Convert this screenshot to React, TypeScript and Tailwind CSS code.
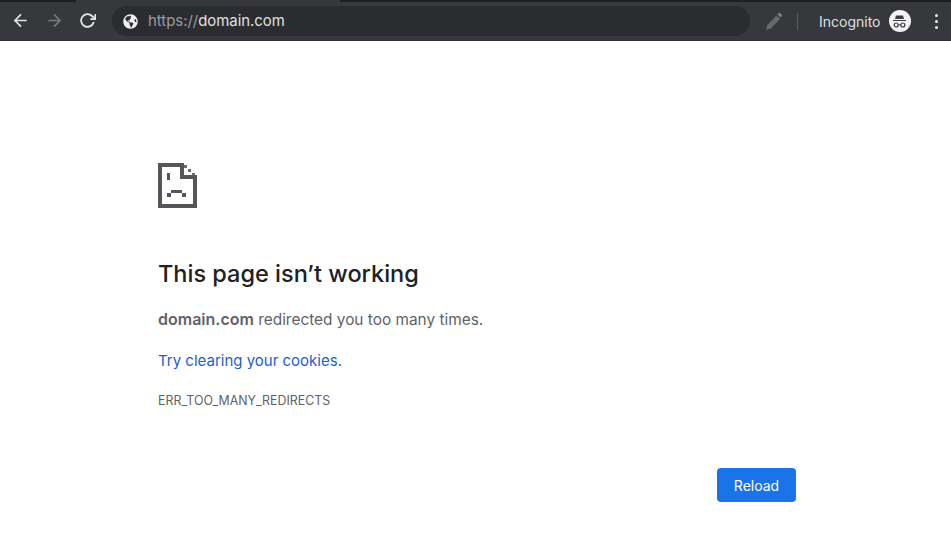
import React from "react";
import { FiArrowLeft, FiArrowRight, FiRotateCw } from "react-icons/fi";
import { FaGlobeAmericas } from "react-icons/fa";

function SadTab() {
  return (
    <svg width="39" height="45" viewBox="0 0 39 45" className="block" shapeRendering="crispEdges">
      <path fill="#55565a" d="M0 0h26v12h13v33h-39zM4 4v37h31v-25h-13v-12z" fillRule="evenodd" />
      <path fill="#6a6b6e" d="M26 2h3v3h-3zM30 6h3v3h-3zM34 10h3v2h-3z" />
      <path fill="#55565a" d="M9 10h3v7h-3zM13 27h11v3h-11zM9 30h4v4h-4zM24 30h4v4h-4z" />
    </svg>
  );
}

function PencilIcon() {
  return (
    <svg width="18" height="19" viewBox="0 0 18 19" fill="none">
      <path fill="#66686b" d="M1 18l1.2-5L11.5 3.4l3.6 3.4L5.9 16.5z" />
      <path fill="#7a7c7f" d="M12.4 2.5l1.3-1.3c.6-.5 1.2-.5 1.7 0l1.4 1.4c.5.5.5 1.1 0 1.7l-1.3 1.3z" />
    </svg>
  );
}

function IncognitoBadge() {
  return (
    <div className="w-[22px] h-[22px] rounded-full bg-[#f4f4f4] flex items-center justify-center">
      <svg width="17" height="17" viewBox="0 0 17 17" fill="none">
        <path fill="#3a3c3f" d="M5 2.5h7l1 3.5H4zM2 7h13v1.1H2z" />
        <circle cx="5.2" cy="12" r="2" stroke="#3a3c3f" strokeWidth="1.2" />
        <circle cx="11.8" cy="12" r="2" stroke="#3a3c3f" strokeWidth="1.2" />
        <path stroke="#3a3c3f" strokeWidth="1" d="M7.2 11.8h2.6" />
      </svg>
    </div>
  );
}

export default function App() {
  return (
    <div className="w-[951px] h-[552px] bg-white overflow-hidden font-['Inter',sans-serif]">
      {/* TAB STRIP EDGE */}
      <div className="h-[2px] flex bg-[#1e1f22]">
        <div className="w-[76px]" />
        <div className="w-[264px] bg-[#36383b]" />
      </div>

      {/* TOOLBAR */}
      <div className="h-[39px] bg-[#36383b] border-b border-b-[#2d2f32] flex items-center">
        <div className="w-[112px] flex items-center pl-[11px] pb-[2px] gap-[15px] text-[#e4e5e6]">
          <FiArrowLeft size={19} strokeWidth={2.2} />
          <FiArrowRight size={19} strokeWidth={2.2} className="text-[#77797c]" />
          <FiRotateCw size={17} strokeWidth={2.6} />
        </div>
        <div className="w-[638px] h-[30px] rounded-full bg-[#2a2c2f] flex items-center pl-[11px]">
          <FaGlobeAmericas size={15} className="text-[#f0f0f0]" />
          <span className="ml-[10px] text-[14.9px] text-[#9a9c9f]">
            https://<span className="text-[#e0e1e2]">domain.com</span>
          </span>
        </div>
        <div className="ml-[15px]">
          <PencilIcon />
        </div>
        <div className="ml-[14px] w-px h-[17px] bg-[#5c5e61]" />
        <span className="ml-[21px] text-[14px] text-[#dfe0e1]">Incognito</span>
        <div className="ml-[8px]">
          <IncognitoBadge />
        </div>
        <div className="ml-[24px] flex flex-col gap-[3px]">
          <div className="w-[3px] h-[3px] rounded-full bg-[#eeeeee]" />
          <div className="w-[3px] h-[3px] rounded-full bg-[#eeeeee]" />
          <div className="w-[3px] h-[3px] rounded-full bg-[#eeeeee]" />
        </div>
      </div>

      {/* ERROR CONTENT */}
      <div className="w-[638px] ml-[158px] pt-[122px]">
        <SadTab />
        <h1 className="mt-[50px] text-[23.5px] leading-[32px] font-medium text-[#202124]">
          This page isn’t working
        </h1>
        <p className="mt-[19px] text-[15.4px] leading-[20px] text-[#5f6368]">
          <span className="font-semibold text-[16px]">domain.com</span> redirected you too many times.
        </p>
        <p className="mt-[21px] text-[15px] leading-[20px] text-[#1a5fd0]">
          Try clearing your cookies<span className="text-[#5f6368]">.</span>
        </p>
        <p className="mt-[22px] text-[12.4px] leading-[16px] text-[#5f6368]">ERR_TOO_MANY_REDIRECTS</p>
        <div className="mt-[59px] flex justify-end">
          <button className="w-[79px] h-[34px] rounded-[4px] bg-[#1a73e8] text-white text-[14px]">
            Reload
          </button>
        </div>
      </div>
    </div>
  );
}
